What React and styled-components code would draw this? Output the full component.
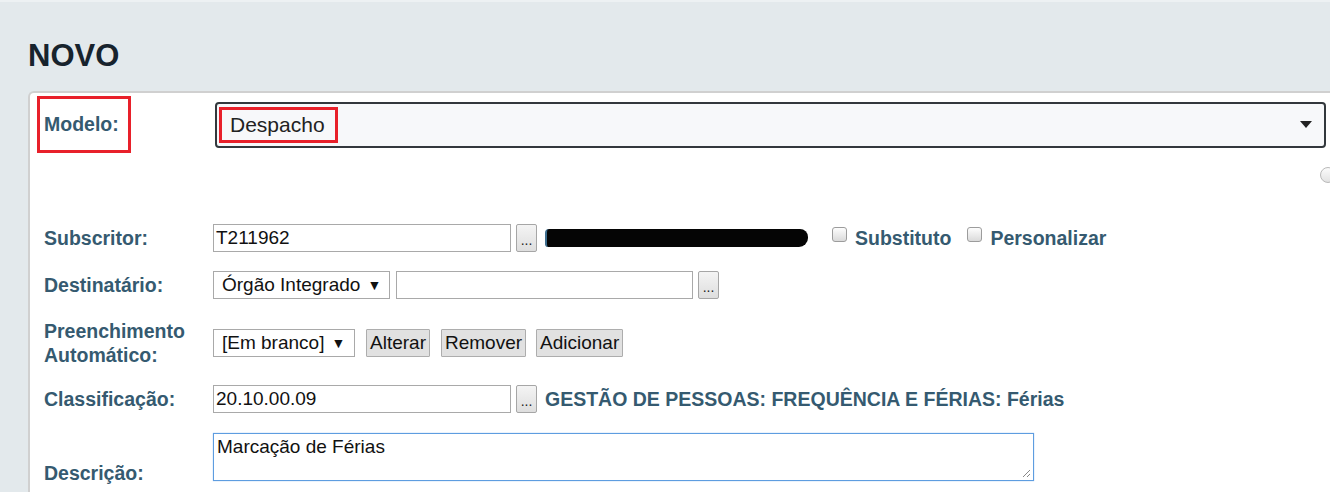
import React from "react";
import styled, { createGlobalStyle } from "styled-components";

const GlobalStyle = createGlobalStyle`
    html, body {
        margin: 0;
        padding: 0;
        background: #e3e9ec;
        overflow: hidden;
    }
    body {
        font-family: "Liberation Sans", Arial, sans-serif;
        border-top: 2px solid #edf1f3;
    }
`;

const Page = styled.div`
    width: 1348px;
    padding: 37px 0 0 28px;
    box-sizing: border-box;
`;

const Title = styled.h1`
    margin: 0 0 18px 0;
    font-size: 31px;
    line-height: 34px;
    font-weight: bold;
    color: #17232d;
`;

const Card = styled.div`
    width: 1320px;
    height: 420px;
    box-sizing: border-box;
    background: #fff;
    border: 2px solid #d0d0d0;
    border-right: none;
    border-bottom: none;
    border-radius: 6px 0 0 0;
    padding: 3px 12px 0 14px;
`;

const Row = styled.div`
    display: flex;
    align-items: ${p => p.$align || "center"};
    height: ${p => p.$height || 28}px;
    margin-top: ${p => p.$top || 0}px;
`;

const Label = styled.div`
    flex: 0 0 ${p => p.$width || 169}px;
    font-size: 19.5px;
    font-weight: bold;
    color: #355a70;
    line-height: 24px;
    margin-bottom: ${p => p.$mb || 0}px;
`;

const HighlightLabel = styled.div`
    box-sizing: border-box;
    width: 94px;
    height: 57px;
    margin-left: -7px;
    margin-right: 84px;
    border: 3px solid #e8202a;
    padding-left: 4px;
    display: flex;
    align-items: center;
    font-size: 19.5px;
    font-weight: bold;
    color: #355a70;
`;

const BigSelect = styled.div`
    flex: 1;
    margin-right: 10px;
    height: 46px;
    box-sizing: border-box;
    border: 2px solid #33383d;
    border-radius: 4px;
    background: #f7f8fa;
    display: flex;
    align-items: center;
    justify-content: space-between;
    padding: 0 12px 0 2px;
`;

const Highlight = styled.span`
    border: 3px solid #e8202a;
    padding: 2px 10px 2px 8px;
    font-size: 21px;
    color: #222;
    line-height: 26px;
`;

const Caret = styled.span`
    width: 0;
    height: 0;
    border-left: 6px solid transparent;
    border-right: 6px solid transparent;
    border-top: 7px solid #222;
`;

const SpacerRow = styled.div`
    height: 71px;
    display: flex;
    justify-content: flex-end;
    align-items: flex-start;
`;

const HelpDot = styled.span`
    margin-top: 14px;
    width: 16px;
    height: 16px;
    box-sizing: border-box;
    border-radius: 50%;
    border: 1px solid #b9b9b9;
    background: linear-gradient(#fbfbfb, #e2e2e2);
`;

const TextInput = styled.div`
    box-sizing: border-box;
    width: ${p => p.$width}px;
    height: 28px;
    margin-left: ${p => p.$ml || 0}px;
    border: 1px solid #a9a9a9;
    background: #fff;
    font-size: 19px;
    color: #111;
    padding: 0 2px;
    display: flex;
    align-items: center;
`;

const DotsButton = styled.span`
    box-sizing: border-box;
    width: 21px;
    height: 28px;
    margin-left: 5px;
    border: 1px solid #a6a6a6;
    border-radius: 2px;
    background: linear-gradient(#f4f4f4, #dedede);
    font-size: 14px;
    color: #222;
    display: flex;
    align-items: flex-end;
    justify-content: center;
    padding-bottom: 4px;
    line-height: 1;
`;

const Redacted = styled.span`
    display: inline-block;
    width: 261px;
    height: 18px;
    margin-left: 8px;
    background: #050505;
    border-radius: 4px 8px 9px 3px;
    border-left: 2px solid #3d6d8e;
`;

const CheckBox = styled.span`
    box-sizing: border-box;
    width: 15px;
    height: 15px;
    margin: 0 8px 8px ${p => p.$ml}px;
    border: 1px solid #9c9c9c;
    border-radius: 3px;
    background: linear-gradient(#fdfdfd, #dadada);
`;

const Inline = styled.span`
    font-size: 19.5px;
    font-weight: bold;
    color: #355a70;
    white-space: nowrap;
    margin-left: ${p => p.$ml || 0}px;
`;

const SelectBox = styled.div`
    box-sizing: border-box;
    width: ${p => p.$width}px;
    height: 28px;
    border: 1px solid #a9a9a9;
    background: #fff;
    font-size: 19px;
    color: #111;
    padding-left: 8px;
    display: flex;
    align-items: center;
    white-space: nowrap;
    gap: 7px;

    small {
        font-size: 14px;
    }
`;

const Button = styled.button`
    box-sizing: border-box;
    height: 28px;
    margin-left: ${p => p.$ml}px;
    padding: 0 3px;
    border: 1px solid #adadad;
    border-radius: 1px;
    background: #e1e1e1;
    font-family: "Liberation Sans", Arial, sans-serif;
    font-size: 19px;
    color: #111;
`;

const TextArea = styled.div`
    position: relative;
    box-sizing: border-box;
    width: 821px;
    height: 48px;
    border: 1px solid #5e9de0;
    box-shadow: 0 0 1px #8ab8ee;
    background: #fff;
    font-size: 19px;
    color: #111;
    padding: 2px 3px;
    line-height: 22px;
`;

const Grip = styled.svg`
    position: absolute;
    right: 2px;
    bottom: 2px;
`;

const App = () => {
    return (
        <>
            <GlobalStyle />
            <Page>
                <Title>NOVO</Title>
                <Card>
                    <Row $height={57}>
                        <HighlightLabel>Modelo:</HighlightLabel>
                        <BigSelect>
                            <Highlight>Despacho</Highlight>
                            <Caret />
                        </BigSelect>
                    </Row>
                    <SpacerRow>
                        <HelpDot />
                    </SpacerRow>

                    <Row>
                        <Label>Subscritor:</Label>
                        <TextInput $width={298}>T211962</TextInput>
                        <DotsButton>...</DotsButton>
                        <Redacted />
                        <CheckBox $ml={24} />
                        <Inline>Substituto</Inline>
                        <CheckBox $ml={16} />
                        <Inline>Personalizar</Inline>
                    </Row>

                    <Row $top={19}>
                        <Label>Destinatário:</Label>
                        <SelectBox $width={177}>
                            Órgão Integrado <small>▼</small>
                        </SelectBox>
                        <TextInput $width={297} $ml={6} />
                        <DotsButton>...</DotsButton>
                    </Row>

                    <Row $top={20} $height={48}>
                        <Label>
                            Preenchimento
                            <br />
                            Automático:
                        </Label>
                        <SelectBox $width={142}>
                            [Em branco] <small>▼</small>
                        </SelectBox>
                        <Button $ml={11}>Alterar</Button>
                        <Button $ml={11}>Remover</Button>
                        <Button $ml={10}>Adicionar</Button>
                    </Row>

                    <Row $top={18}>
                        <Label>Classificação:</Label>
                        <TextInput $width={298}>20.10.00.09</TextInput>
                        <DotsButton>...</DotsButton>
                        <Inline $ml={8}>GESTÃO DE PESSOAS: FREQUÊNCIA E FÉRIAS: Férias</Inline>
                    </Row>

                    <Row $top={20} $height={48} $align="flex-end">
                        <Label $mb={-4}>Descrição:</Label>
                        <TextArea>
                            Marcação de Férias
                            <Grip width="10" height="10" viewBox="0 0 10 10">
                                <path d="M9 2 L2 9 M9 6 L6 9" stroke="#888" strokeWidth="1" />
                            </Grip>
                        </TextArea>
                    </Row>
                </Card>
            </Page>
        </>
    );
};

export default App;
